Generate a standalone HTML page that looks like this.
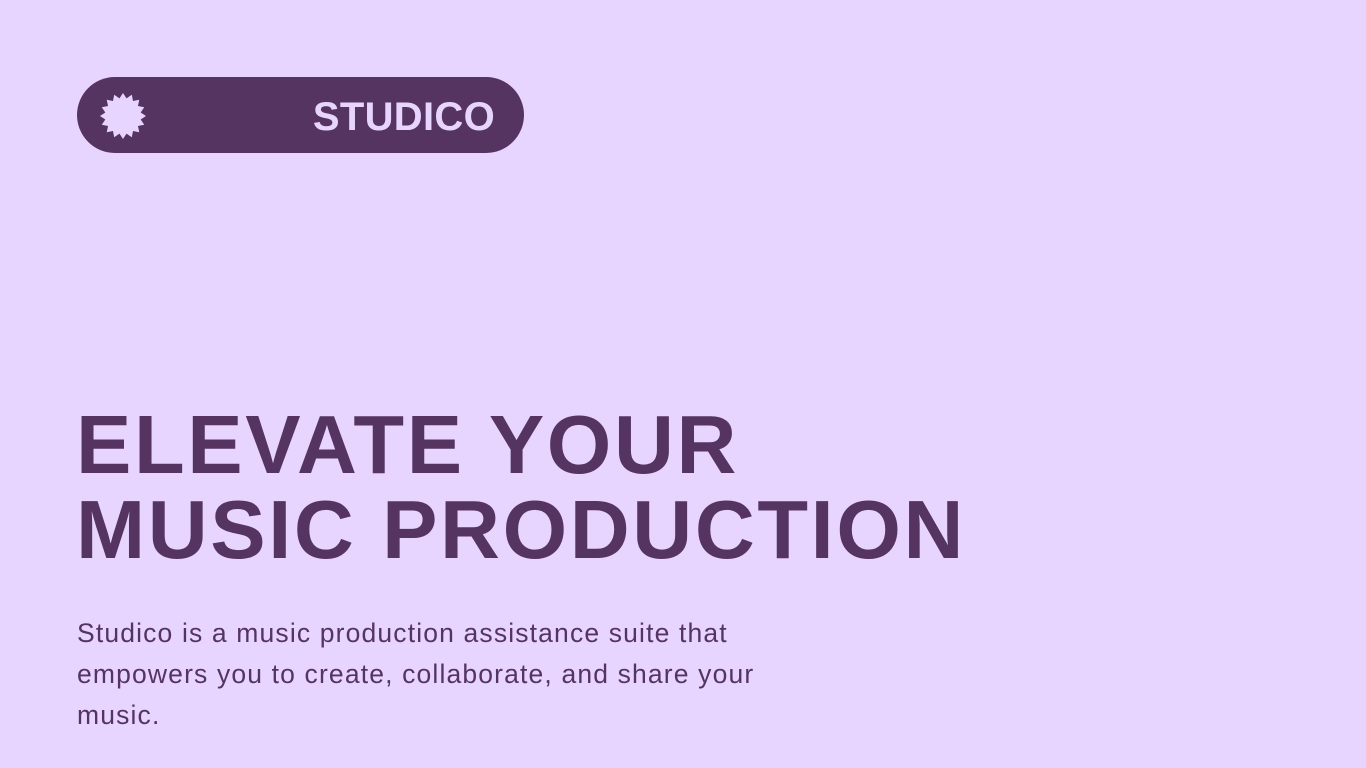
<!DOCTYPE html>
<html><head><meta charset="utf-8"><style>
html,body{margin:0;padding:0}
body{width:1366px;height:768px;background:#e7d4ff;position:relative;overflow:hidden;font-family:"Liberation Sans",sans-serif;color:#553462}
.pill{position:absolute;left:77px;top:77px;width:447px;height:76px;border-radius:38px;background:#553462}
.pill svg{position:absolute;left:22px;top:15px}
.logo{position:absolute;right:29px;top:1px;line-height:78px;font-size:40px;font-weight:bold;color:#e7d4ff;letter-spacing:0.3px}
h1{position:absolute;left:76px;top:402px;margin:0;font-size:83px;line-height:85px;font-weight:bold;letter-spacing:2.6px;white-space:nowrap}
p{position:absolute;left:77px;top:613px;margin:0;width:800px;font-size:26.5px;line-height:41px;letter-spacing:1.15px;white-space:nowrap}
</style></head><body>
<div class="pill">
<svg width="48" height="48" viewBox="0 0 48 48"><polygon fill="#e7d4ff" points="24,1 27.51,6.34 32.81,2.75 34.01,9.04 40.26,7.74 38.96,13.99 45.25,15.19 41.66,20.49 47,24 41.66,27.51 45.25,32.81 38.96,34.01 40.26,40.26 34.01,38.96 32.81,45.25 27.51,41.66 24,47 20.49,41.66 15.19,45.25 13.99,38.96 7.74,40.26 9.04,34.01 2.75,32.81 6.34,27.51 1,24 6.34,20.49 2.75,15.19 9.04,13.99 7.74,7.74 13.99,9.04 15.19,2.75 20.49,6.34"/></svg>
<div class="logo">STUDICO</div>
</div>
<h1>ELEVATE YOUR<br>MUSIC PRODUCTION</h1>
<p>Studico is a music production assistance suite that<br>empowers you to create, collaborate, and share your<br>music.</p>
</body></html>
